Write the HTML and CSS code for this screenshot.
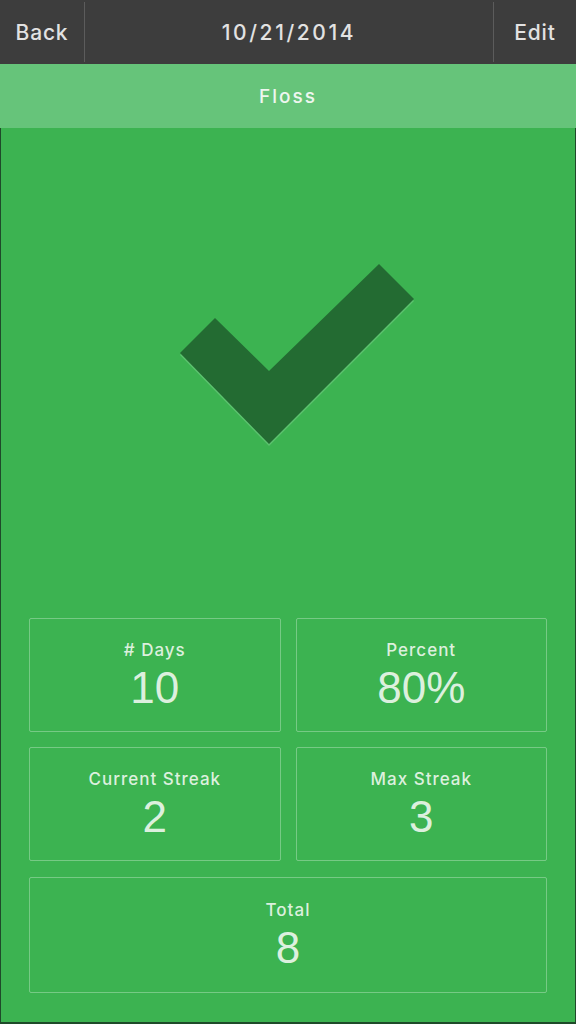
FILE: index.html
```html
<!DOCTYPE html>
<html lang="en">
<head>
    <meta charset="UTF-8">
    <meta name="viewport" content="width=device-width, initial-scale=1.0">
    <title>Floss</title>
    <link rel="stylesheet" href="styles.css">
</head>
<body>
    <div class="app">
        <div class="topbar">
            <div class="nav-btn">Back</div>
            <div class="title">10/21/2014</div>
            <div class="nav-btn">Edit</div>
        </div>

        <div class="screen">
            <div class="habit-name">Floss</div>

            <div class="hero">
                <svg class="check" width="576" height="490" viewBox="0 128 576 490">
                    <polygon points="180,355 215,320 269,373 379,266 414,301 269,446" fill="#5cc26f"/>
                    <polygon points="180,353 215,318 269,371 379,264 414,299 269,444" fill="#236b32"/>
                </svg>
            </div>

            <div class="stats">
                <div class="stat-card">
                    <div class="stat-label"># Days</div>
                    <div class="stat-number">10</div>
                </div>
                <div class="stat-card">
                    <div class="stat-label">Percent</div>
                    <div class="stat-number">80%</div>
                </div>
                <div class="stat-card">
                    <div class="stat-label">Current Streak</div>
                    <div class="stat-number">2</div>
                </div>
                <div class="stat-card">
                    <div class="stat-label">Max Streak</div>
                    <div class="stat-number">3</div>
                </div>
                <div class="stat-card wide">
                    <div class="stat-label">Total</div>
                    <div class="stat-number">8</div>
                </div>
            </div>
        </div>
    </div>
</body>
</html>
```

FILE: styles.css
```css
body {
    margin: 0;
    font-family: Inter, "Liberation Sans", Arial, sans-serif;
    background: #3d3d3d;
}
.app {
    width: 576px;
    height: 1024px;
    display: flex;
    flex-direction: column;
}
.topbar {
    height: 64px;
    display: grid;
    grid-template-columns: 85px 1fr 83px;
    background: #3d3d3d;
    color: #e2e2e2;
    font-size: 21px;
    font-weight: 500;
    letter-spacing: 0.8px;
}
.nav-btn, .title {
    display: flex;
    align-items: center;
    justify-content: center;
}
.nav-btn:first-child {
    border-right: 1px solid #5c5c5c;
}
.nav-btn:last-child {
    border-left: 1px solid #5c5c5c;
}
.topbar > div {
    margin: 2px 0;
}
.title {
    letter-spacing: 2.6px;
}
.screen {
    flex: 1;
    display: flex;
    flex-direction: column;
    background: #3cb351;
    border: 1px solid #1f4a2a;
    border-top: none;
    border-bottom-width: 2px;
}
.habit-name {
    height: 64px;
    display: flex;
    align-items: center;
    justify-content: center;
    background: #66c47a;
    color: #eef6ef;
    font-size: 19px;
    font-weight: 500;
    letter-spacing: 2px;
    margin: 0 -1px;
}
.hero {
    height: 490px;
    margin: 0 -1px;
    overflow: hidden;
}
.check {
    display: block;
}
.stats {
    display: grid;
    grid-template-columns: 1fr 1fr;
    grid-auto-rows: 114px;
    gap: 15px 15px;
    padding: 0 28px;
}
.stat-card {
    border: 1px solid rgba(255, 255, 255, 0.3);
    border-radius: 2px;
    display: flex;
    flex-direction: column;
    align-items: center;
    justify-content: center;
    color: #dcf0de;
}
.stat-card.wide {
    grid-column: span 2;
    margin-top: 1px;
    height: 114px;
}
.stat-label {
    font-size: 17px;
    font-weight: 500;
    line-height: 20px;
    letter-spacing: 1px;
}
.stat-number {
    font-family: "Liberation Sans", Arial, sans-serif;
    font-size: 44px;
    line-height: 44px;
    margin-top: 6px;
}
```
